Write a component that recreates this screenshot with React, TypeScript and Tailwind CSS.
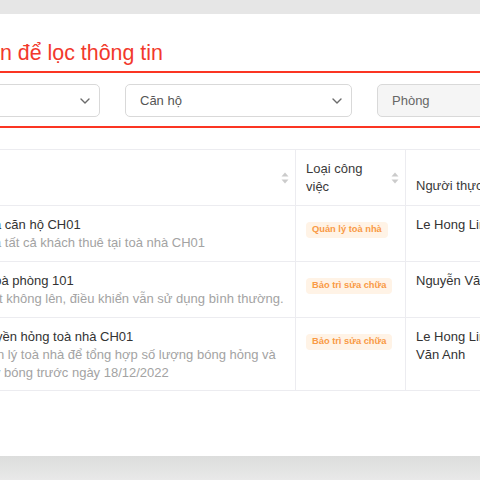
import React from "react";

function Chevron() {
  return (
    <svg width="10" height="6" viewBox="0 0 10 6" fill="none">
      <path d="M1 1l4 4 4-4" stroke="#6b6b6b" strokeWidth="1.4" strokeLinecap="round" strokeLinejoin="round" />
    </svg>
  );
}

function SortIcon() {
  return (
    <svg width="8" height="12" viewBox="0 0 8 12" fill="#cbcbcb">
      <path d="M4 0.5L7.5 4.5H0.5Z" />
      <path d="M4 11.5L7.5 7.5H0.5Z" />
    </svg>
  );
}

function Tag({ children }: { children: React.ReactNode }) {
  return (
    <span className="inline-flex h-[16px] items-center rounded-[4px] bg-[#fff3e6] px-[6px] text-[9.3px] font-bold leading-none text-[#f99a45]">
      {children}
    </span>
  );
}

export default function App() {
  return (
    <div className="flex h-[480px] w-[480px] flex-col overflow-hidden bg-[#e5e5e5] font-['Liberation_Sans',Arial,sans-serif]">
      <div className="h-[14px] shrink-0 bg-[#e6e6e6]" />
      <div className="h-[442px] shrink-0 overflow-hidden bg-white">
        <div className="mt-[27px] whitespace-nowrap text-[21.4px] leading-[24px] text-[#f2392c]">
          n để lọc thông tin
        </div>
        <div className="mt-[6px] border-y-2 border-[#fb3523] pb-[9px] pt-[11px]">
          <div className="-ml-[127px] flex gap-[25px]">
            <div className="flex h-[33px] w-[227px] shrink-0 items-center justify-end rounded-[5px] border border-[#d9d9d9] bg-white pr-[9px]">
              <Chevron />
            </div>
            <div className="flex h-[33px] w-[227px] shrink-0 items-center justify-between rounded-[5px] border border-[#d9d9d9] bg-white pl-[14px] pr-[9px] text-[13px] text-[#555]">
              <span>Căn hộ</span>
              <Chevron />
            </div>
            <div className="flex h-[33px] w-[227px] shrink-0 items-center rounded-[5px] border border-[#d9d9d9] bg-[#f5f5f5] pl-[14px] text-[13px] text-[#666]">
              <span>Phòng</span>
            </div>
          </div>
        </div>

        <div className="mt-[21px] border-t border-[#ececf0] text-[13px] leading-[18px]">
          {/* header */}
          <div className="flex h-[56px] border-b border-[#ececf0]">
            <div className="flex w-[295px] shrink-0 items-center justify-end pr-[6px]">
              <SortIcon />
            </div>
            <div className="flex w-[110px] shrink-0 items-center justify-between border-l border-[#ececf0] pl-[10px] pr-[6px] text-[#3a3a3a]">
              <span>
                Loại công
                <br />
                việc
              </span>
              <SortIcon />
            </div>
            <div className="flex flex-1 items-end whitespace-nowrap border-l border-[#ececf0] pb-[10px] pl-[10px] text-[#3a3a3a]">
              Người thực hiện
            </div>
          </div>

          {/* row 1 */}
          <div className="flex border-b border-[#ececf0]">
            <div className="w-[295px] shrink-0 overflow-hidden whitespace-nowrap pb-[9px] pt-[10px]">
              <div className="-ml-[6px] text-[#333]">a căn hộ CH01</div>
              <div className="-ml-[6px] text-[#a3a3a3]">a tất cả khách thuê tại toà nhà CH01</div>
            </div>
            <div className="w-[110px] shrink-0 border-l border-[#ececf0] pl-[10px] pt-[13px]">
              <Tag>Quản lý toà nhà</Tag>
            </div>
            <div className="flex-1 whitespace-nowrap border-l border-[#ececf0] pl-[10px] pt-[10px] text-[#333]">
              Le Hong Linh
            </div>
          </div>

          {/* row 2 */}
          <div className="flex border-b border-[#ececf0]">
            <div className="w-[295px] shrink-0 overflow-hidden whitespace-nowrap pb-[9px] pt-[10px]">
              <div className="-ml-[13px] text-[#333]">hoà phòng 101</div>
              <div className="-ml-[1px] text-[#a3a3a3]">t không lên, điều khiển vẫn sử dụng bình thường.</div>
            </div>
            <div className="w-[110px] shrink-0 border-l border-[#ececf0] pl-[10px] pt-[13px]">
              <Tag>Bảo trì sửa chữa</Tag>
            </div>
            <div className="flex-1 whitespace-nowrap border-l border-[#ececf0] pl-[10px] pt-[10px] text-[#333]">
              Nguyễn Văn A
            </div>
          </div>

          {/* row 3 */}
          <div className="flex border-b border-[#ececf0]">
            <div className="w-[295px] shrink-0 overflow-hidden whitespace-nowrap pb-[8px] pt-[10px]">
              <div className="-ml-[4px] text-[#333]">yền hỏng toà nhà CH01</div>
              <div className="-ml-[3px] text-[#a3a3a3]">n lý toà nhà để tổng hợp số lượng bóng hỏng và</div>
              <div className="-ml-[6px] text-[#a3a3a3]">y bóng trước ngày 18/12/2022</div>
            </div>
            <div className="w-[110px] shrink-0 border-l border-[#ececf0] pl-[10px] pt-[13px]">
              <Tag>Bảo trì sửa chữa</Tag>
            </div>
            <div className="flex-1 whitespace-nowrap border-l border-[#ececf0] pl-[10px] pt-[10px] text-[#333]">
              Le Hong Linh
              <br />
              Văn Anh
            </div>
          </div>
        </div>
      </div>
      <div className="flex-1 bg-gradient-to-b from-[#dcdddc] to-[#e9e9e9]" />
    </div>
  );
}
